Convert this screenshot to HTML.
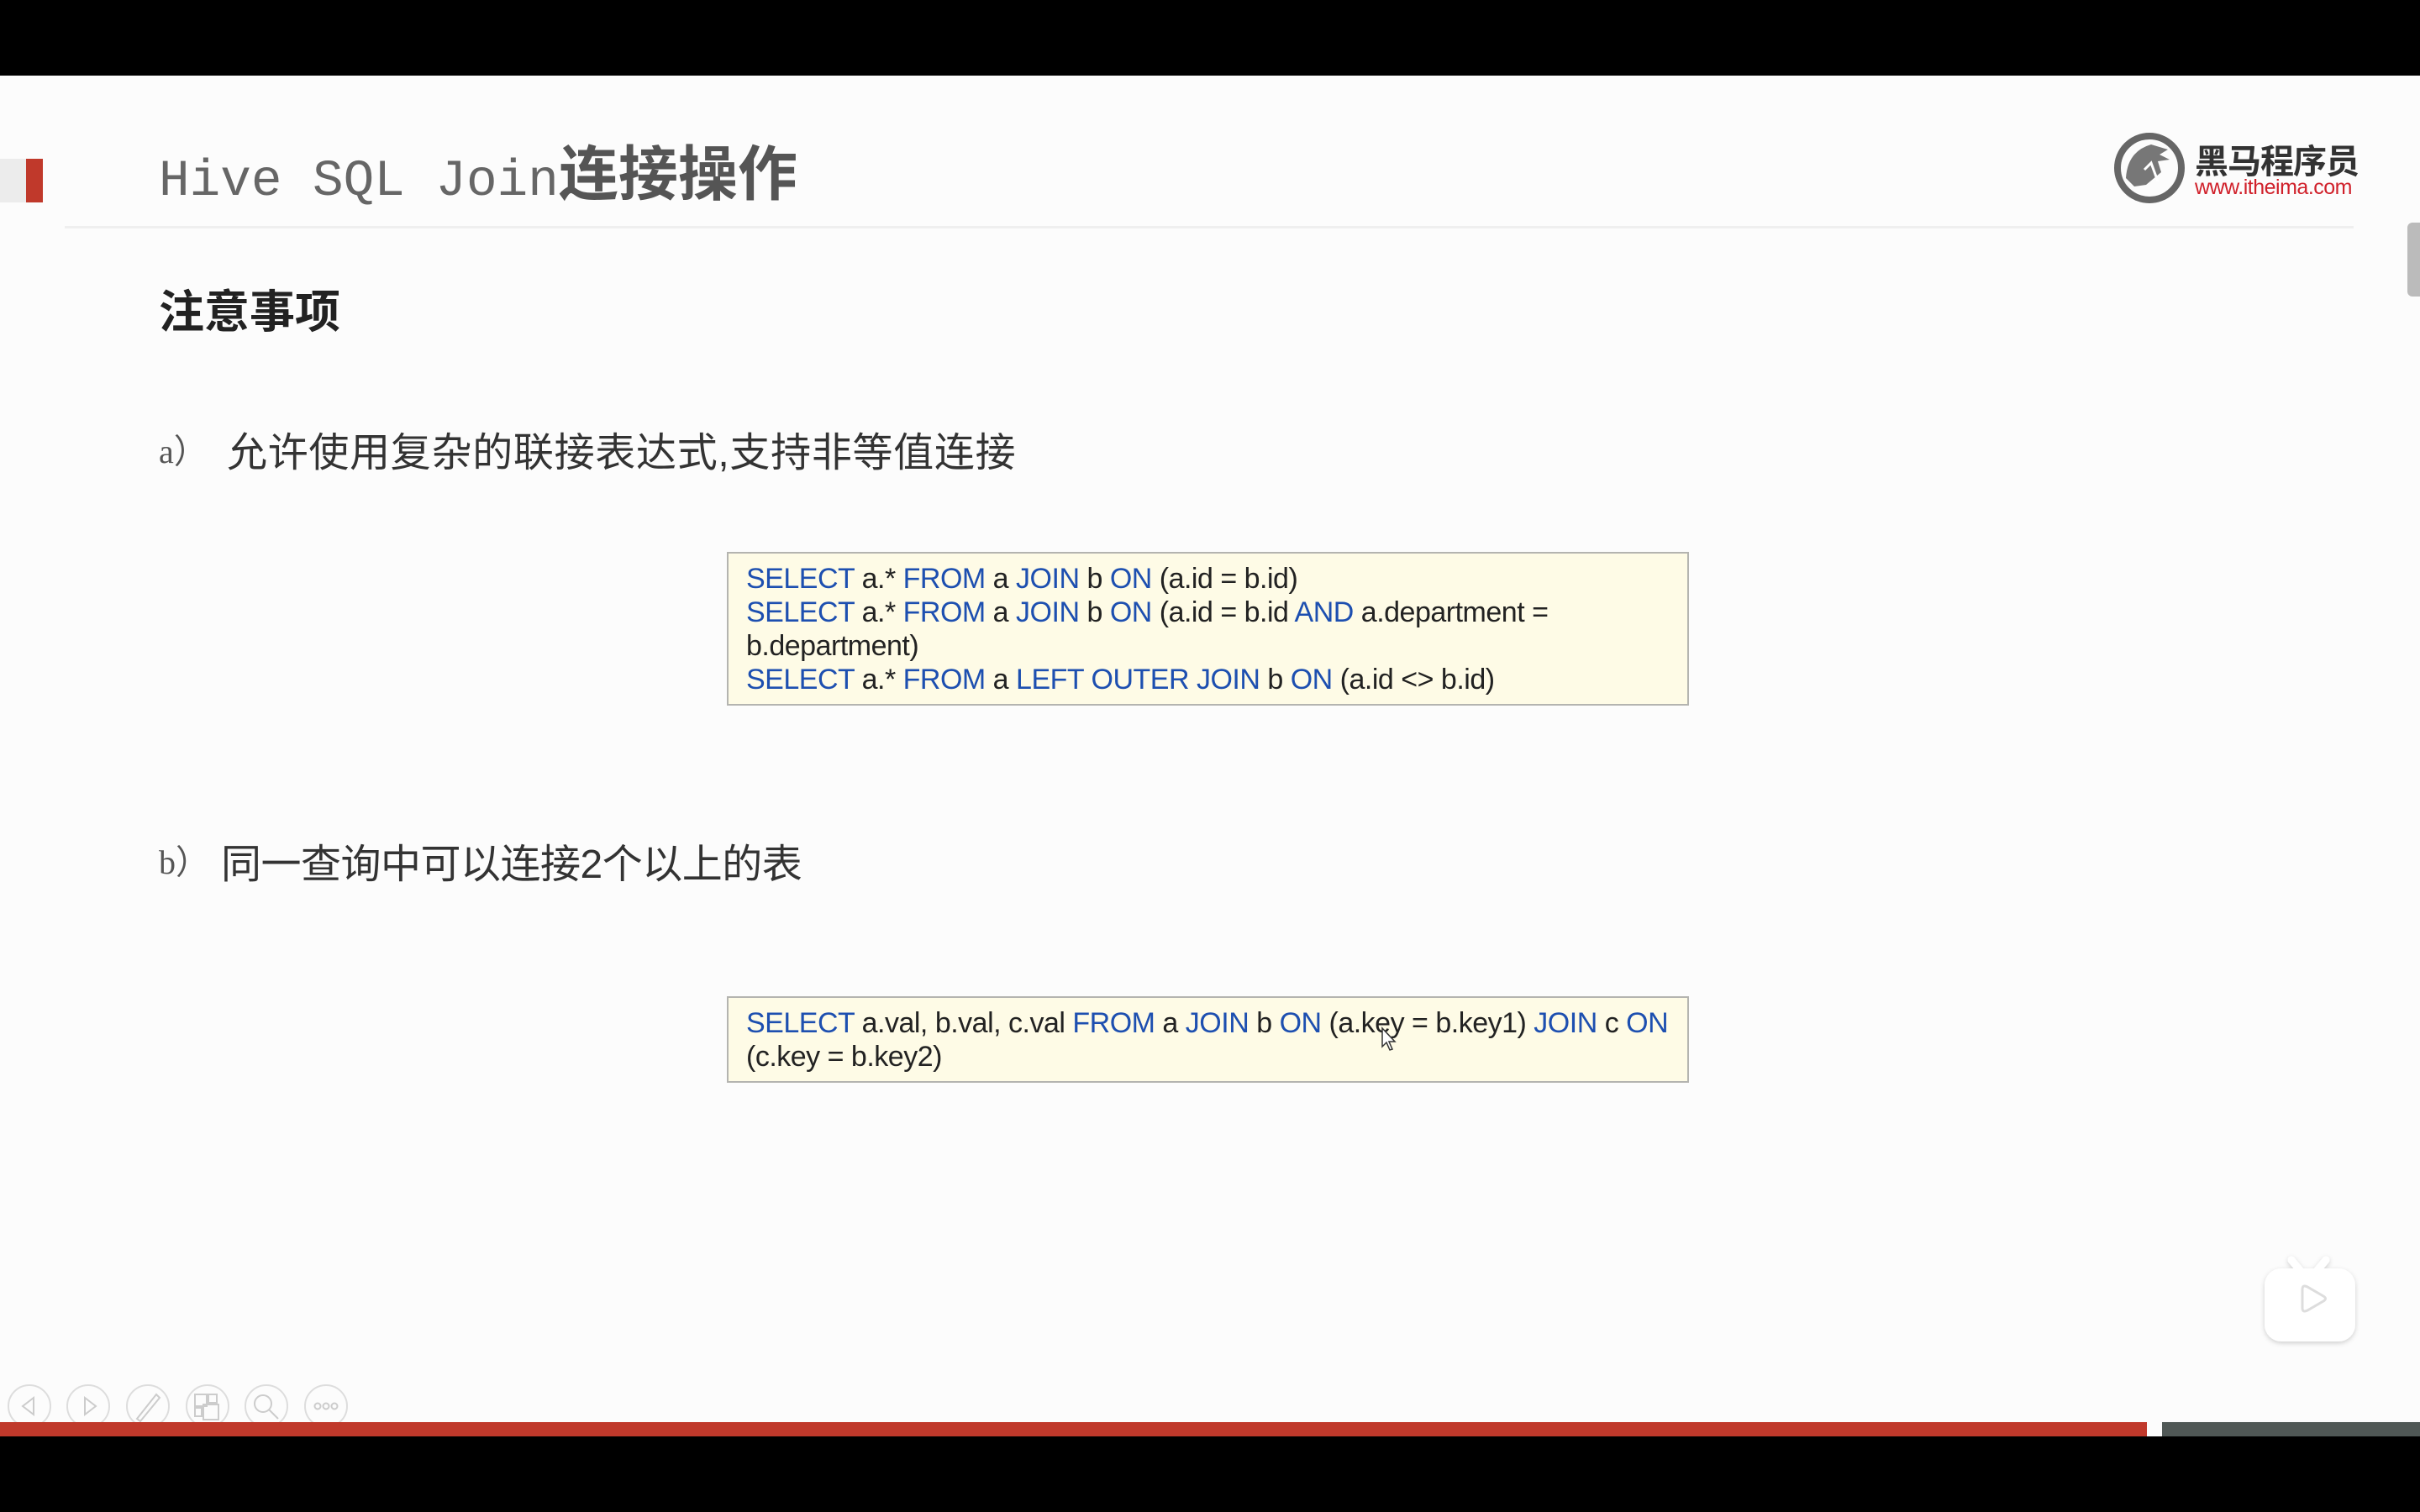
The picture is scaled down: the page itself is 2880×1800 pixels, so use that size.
<!DOCTYPE html>
<html><head><meta charset="utf-8">
<style>
*{margin:0;padding:0;box-sizing:border-box}
html,body{width:2880px;height:1800px;overflow:hidden;background:#000}
#slide{position:absolute;left:0;top:90px;width:2880px;height:1620px;background:#fcfcfc}
.abs{position:absolute;white-space:nowrap}
.cn{font-family:"Liberation Sans","Noto Sans CJK SC",sans-serif}
.code{position:absolute;background:#fefbe6;border:2px solid #b4b4b0;font-family:"Liberation Sans",sans-serif;font-size:34px;letter-spacing:-0.5px;color:#222;padding-left:21px}
.code div{height:40px;line-height:40px;white-space:nowrap}
.k{color:#1d4fb0}
.nav{position:absolute;top:1648px;width:52px;height:52px;border:2px solid #ddd;border-radius:50%}
</style></head><body>
<div id="slide"></div>
<div class="abs" style="left:0;top:189px;width:31px;height:52px;background:#ececec"></div>
<div class="abs" style="left:31px;top:189px;width:20px;height:52px;background:#c0392b"></div>
<div class="abs" style="left:189px;top:164px;height:90px;line-height:90px;color:#666">
<span style="font-family:'Liberation Mono',monospace;font-size:61px;vertical-align:baseline">Hive SQL Join</span><span class="cn" style="font-size:71px;font-weight:bold;color:#555">连接操作</span>
</div>
<div class="abs" style="left:77px;top:269px;width:2724px;height:3px;background:#efefef"></div>
<svg class="abs" style="left:2510px;top:150px" width="100" height="100" viewBox="0 0 100 100">
<circle cx="48" cy="50" r="38" fill="none" stroke="#666" stroke-width="8"/>
<path d="M20 62 Q22 30 50 22 L70 28 L60 34 L72 40 L58 42 L62 55 L44 70 L30 72 Z" fill="#777"/>
<path d="M42 52 L50 44 L58 66" fill="none" stroke="#fff" stroke-width="3"/>
</svg>
<div class="abs cn" style="left:2612px;top:160px;font-size:40px;font-weight:bold;color:#333;letter-spacing:-1px">黑马程序员</div>
<div class="abs" style="left:2612px;top:209px;font-family:'Liberation Sans',sans-serif;font-size:25px;color:#d0202a;letter-spacing:-0.5px">www.itheima.com</div>
<div class="abs" style="left:2865px;top:265px;width:15px;height:88px;background:#bbb;border-radius:6px 0 0 6px"></div>
<div class="abs cn" style="left:189px;top:327px;font-size:54px;font-weight:bold;color:#222">注意事项</div>
<div class="abs" style="left:189px;top:505px;font-family:'Liberation Serif',serif;font-size:40px;color:#555">a）</div>
<div class="abs cn" style="left:270px;top:499px;font-size:48px;color:#333;letter-spacing:0.7px">允许使用复杂的联接表达式,支持非等值连接</div>
<div class="code" style="left:865px;top:657px;width:1145px;height:183px;padding-top:10px">
<div><span class="k">SELECT</span> a.* <span class="k">FROM</span> a <span class="k">JOIN</span> b <span class="k">ON</span> (a.id = b.id)</div>
<div><span class="k">SELECT</span> a.* <span class="k">FROM</span> a <span class="k">JOIN</span> b <span class="k">ON</span> (a.id = b.id <span class="k">AND</span> a.department =</div>
<div>b.department)</div>
<div><span class="k">SELECT</span> a.* <span class="k">FROM</span> a <span class="k">LEFT OUTER JOIN</span> b <span class="k">ON</span> (a.id &lt;&gt; b.id)</div>
</div>
<div class="abs" style="left:189px;top:994px;font-family:'Liberation Serif',serif;font-size:40px;color:#555">b）</div>
<div class="abs cn" style="left:263px;top:989px;font-size:48px;color:#333;letter-spacing:-0.5px">同一查询中可以连接2个以上的表</div>
<div class="code" style="left:865px;top:1186px;width:1145px;height:103px;padding-top:10px">
<div><span class="k">SELECT</span> a.val, b.val, c.val <span class="k">FROM</span> a <span class="k">JOIN</span> b <span class="k">ON</span> (a.key = b.key1) <span class="k">JOIN</span> c <span class="k">ON</span></div>
<div>(c.key = b.key2)</div>
</div>
<svg class="abs" style="left:1643px;top:1222px" width="20" height="30" viewBox="0 0 20 30"><path d="M2 2 L2 24 L7 19 L11 28 L14 27 L10 18 L17 18 Z" fill="#fff" stroke="#333" stroke-width="1.5"/></svg>
<div class="nav" style="left:9px"></div>
<div class="nav" style="left:79px"></div>
<div class="nav" style="left:150px"></div>
<div class="nav" style="left:221px"></div>
<div class="nav" style="left:291px"></div>
<div class="nav" style="left:362px"></div>
<svg class="abs" style="left:0;top:1640px" width="420" height="70" viewBox="0 0 420 70" fill="none" stroke="#ccc" stroke-width="2">
<path d="M40 24 L27 34 L40 44 Z"/>
<path d="M101 24 L114 34 L101 44 Z"/>
<path d="M163 49 L186 20 L190 24 L167 52 Z"/>
<rect x="232" y="20" width="14" height="14"/><rect x="248" y="20" width="10" height="10"/><rect x="242" y="32" width="18" height="18"/><rect x="232" y="36" width="8" height="10"/>
<circle cx="313" cy="31" r="10"/><path d="M320 38 L331 49"/>
<circle cx="378" cy="34" r="3.5"/><circle cx="388" cy="34" r="3.5"/><circle cx="398" cy="34" r="3.5"/>
</svg>
<div class="abs" style="left:0;top:1693px;width:2555px;height:17px;background:#c0392b"></div>
<div class="abs" style="left:2573px;top:1693px;width:307px;height:17px;background:#505856"></div>
<svg class="abs" style="left:2685px;top:1488px" width="130" height="120" viewBox="0 0 130 120">
<defs><filter id="s" x="-20%" y="-20%" width="140%" height="140%"><feDropShadow dx="0" dy="2" stdDeviation="3" flood-color="#000" flood-opacity="0.18"/></filter></defs>
<g filter="url(#s)">
<path d="M42 12 L52 24 M83 12 L73 24" stroke="#fff" stroke-width="9" stroke-linecap="round"/>
<rect x="10" y="22" width="108" height="87" rx="20" fill="#fff"/>
</g>
<path d="M55 47 Q55 41 61 44 L80 55 Q85 58 80 61 L61 72 Q55 75 55 69 Z" fill="none" stroke="#ddd" stroke-width="3"/>
</svg>
</body></html>
